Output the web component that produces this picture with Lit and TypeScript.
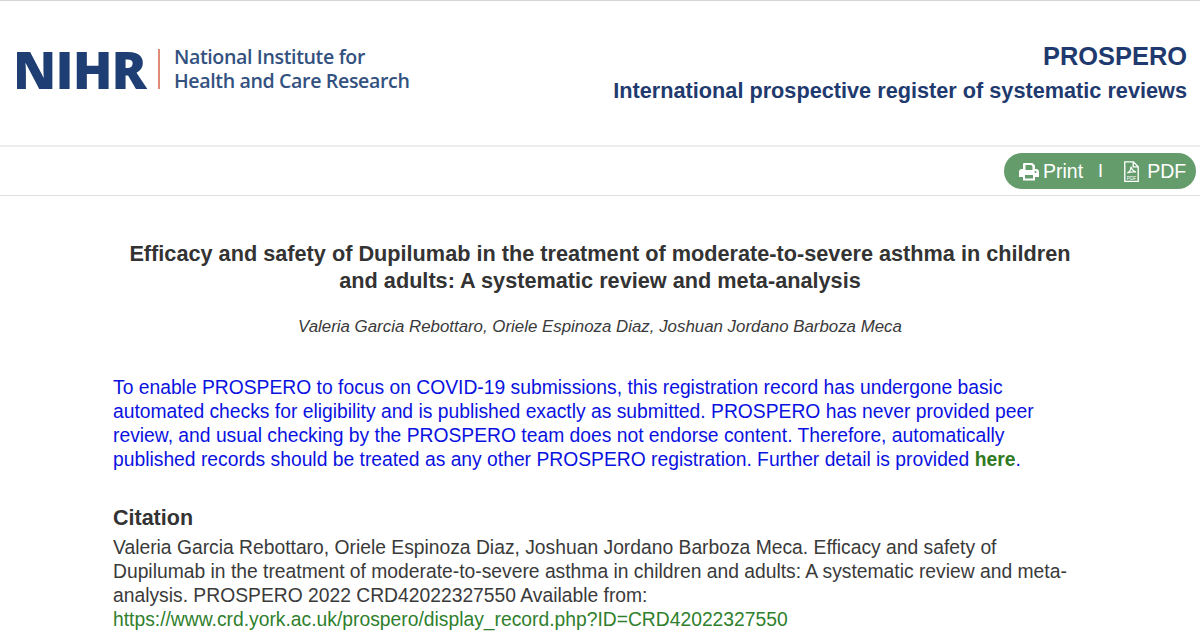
import { LitElement, html, css, svg } from "lit";
import { customElement } from "lit/decorators.js";

const printIcon = svg`<path fill="currentColor" d="M5 1h8.500L16 3.500V7h1.200C18.800 7 20 8.200 20 9.800V15h-4v3.500H4V15H0V9.800C0 8.200 1.200 7 2.800 7H4V2q0-1 1-1zm1.500 2v5h7V4.500L12.300 3zM6 13v3.500h8V13zm10.500-4a1 1 0 1 0 0 2 1 1 0 0 0 0-2z"/>`;
const pdfIcon = svg`<path fill="none" stroke="currentColor" stroke-width="1.300" d="M1.600.8h8.200l4.600 4.600v14H1.600zM9.600 1v4.600h4.600"/><path fill="none" stroke="currentColor" stroke-width="1.100" d="M4 11.500c2-1 3.500-3.500 3.400-6 1 3 2.500 4.500 5 5-2.500-.3-6 0-8.400 1z"/><text x="8" y="18.300" font-size="4.600" text-anchor="middle" fill="currentColor" font-family="Liberation Sans">PDF</text>`;

@customElement("app-root")
export class AppRoot extends LitElement {
  static styles = css`
    :host { display: block; width: 1200px; height: 640px; overflow: hidden; background: #fff; font-family: "Liberation Sans", Arial, sans-serif; color: #3a3a3a; }
    .head { box-sizing: border-box; height: 147px; border-top: 1px solid #d4d4d4; border-bottom: 2px solid #ececec; display: flex; justify-content: space-between; padding: 0 13px 0 13px; }
    .logo { display: flex; align-items: center; height: 136px; color: #1f3f74; }
    .nihr { font-family: "Open Sans", sans-serif; font-weight: 800; font-size: 52px; line-height: 54px; letter-spacing: -0.9px; }
    .rule { width: 2px; height: 40px; background: #e08a78; margin: 0 14px 0 12px; }
    .inst { font-family: "Open Sans", sans-serif; font-size: 19.600px; line-height: 24px; font-weight: 600; color: #33517f; white-space: nowrap; letter-spacing: -0.37px; }
    .brand { text-align: right; color: #1f3a6e; font-weight: 700; }
    .brand .p { font-size: 25.400px; line-height: 30px; margin-top: 40px; }
    .brand .s { font-size: 21.700px; line-height: 28px; margin-top: 6px; }
    .bar { box-sizing: border-box; height: 49px; border-bottom: 1px solid #dfdfdf; display: flex; justify-content: flex-end; align-items: center; padding: 0 4px 0 0; }
    .pill { display: flex; align-items: center; box-sizing: border-box; width: 192px; height: 36px; border-radius: 18px; background: #659c6c; color: #fff; font-size: 19.500px; padding-left: 15px; }
    .pill svg { display: block; }
    .pill .t1 { margin-left: 4px; }
    .pill .sep { margin: 0 20px 0 15px; font-size: 18px; }
    .pill .t2 { margin-left: 7px; }
    main { box-sizing: border-box; padding: 0 112px 0 113px; }
    h1 { margin: 44px 0 0 7px; width: 960px; text-align: center; font-size: 21.700px; line-height: 27px; font-weight: 700; color: #333; }
    .auth { margin: 21px 0 0 7px; width: 960px; text-align: center; font-size: 16.860px; line-height: 24px; font-style: italic; }
    .note { margin: 37px 0 0; color: #0a12e0; font-size: 19.300px; line-height: 24px; width: 975px; }
    .note b { color: #2f7a22; }
    h2 { margin: 32px 0 0; font-size: 21.500px; line-height: 28px; font-weight: 700; color: #333; }
    .cite { margin: 4px 0 0; font-size: 19.300px; line-height: 24px; width: 975px; }
    .cite a { color: #2f7f2d; text-decoration: none; }
  `;
  render() {
    return html`
      <div class="head">
        <div class="logo">
          <span class="nihr">NIHR</span><span class="rule"></span>
          <span class="inst">National Institute for<br />Health and Care Research</span>
        </div>
        <div class="brand">
          <div class="p">PROSPERO</div>
          <div class="s">International prospective register of systematic reviews</div>
        </div>
      </div>
      <div class="bar">
        <div class="pill">
          <svg width="20" height="19" viewBox="0 0 20 19">${printIcon}</svg>
          <span class="t1">Print</span><span class="sep">I</span>
          <svg width="17" height="21" viewBox="0 0 16 20">${pdfIcon}</svg>
          <span class="t2">PDF</span>
        </div>
      </div>
      <main>
        <h1>Efficacy and safety of Dupilumab in the treatment of moderate-to-severe asthma in children and adults: A systematic review and meta-analysis</h1>
        <div class="auth">Valeria Garcia Rebottaro, Oriele Espinoza Diaz, Joshuan Jordano Barboza Meca</div>
        <p class="note">To enable PROSPERO to focus on COVID-19 submissions, this registration record has undergone basic automated checks for eligibility and is published exactly as submitted. PROSPERO has never provided peer review, and usual checking by the PROSPERO team does not endorse content. Therefore, automatically published records should be treated as any other PROSPERO registration. Further detail is provided <b>here</b>.</p>
        <h2>Citation</h2>
        <p class="cite">Valeria Garcia Rebottaro, Oriele Espinoza Diaz, Joshuan Jordano Barboza Meca. Efficacy and safety of Dupilumab in the treatment of moderate-to-severe asthma in children and adults: A systematic review and meta-analysis. PROSPERO 2022 CRD42022327550 Available from: <a href="#">https://www.crd.york.ac.uk/prospero/display_record.php?ID=CRD42022327550</a></p>
      </main>
    `;
  }
}
